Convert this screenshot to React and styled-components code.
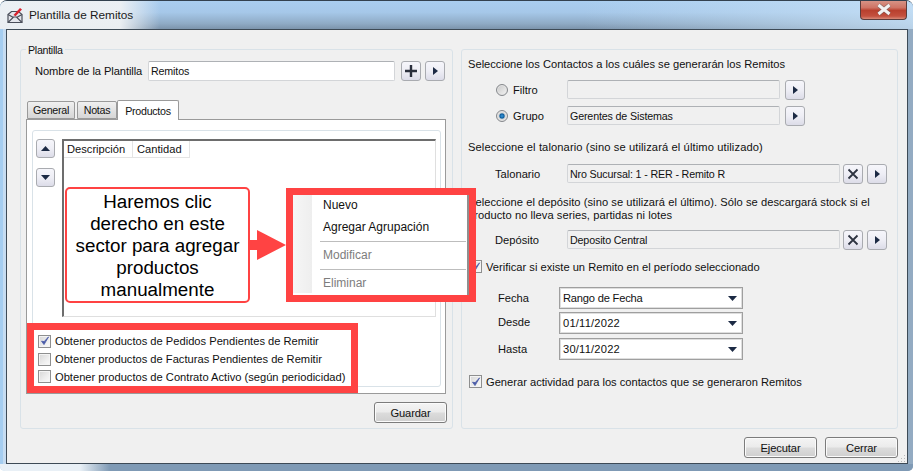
import React from 'react'
import styled, { createGlobalStyle } from 'styled-components'

const Global = createGlobalStyle`
  html, body { margin: 0; padding: 0; background: #fff; }
  body { width: 913px; height: 471px; overflow: hidden; font-family: "Liberation Sans", Arial, sans-serif; font-size: 11.15px; color: #111; }
`

const Win = styled.div`
  position: relative;
  width: 913px;
  height: 471px;
  box-sizing: border-box;
  display: flex;
  flex-direction: column;
  border-radius: 7px 7px 5px 5px;
  overflow: hidden;
  border-top: 1px solid #33414f;
  background:
    linear-gradient(90deg, #e9f0f6 0, #e9f0f6 80px, #7f9ab5 110px) bottom / 100% 7px no-repeat,
    linear-gradient(90deg, #a5cdf0 0, #a5cdf0 3px, #c6dcf1 3px, #c6dcf1 6px, #7f9ab5 6px, #7f9ab5 907px, #93abc2 907px, #93abc2 100%);
`

const TitleBar = styled.div`
  height: 28px;
  display: flex;
  align-items: center;
  flex-shrink: 0;
  padding-left: 7px;
  gap: 6px;
  background:
    linear-gradient(90deg, rgba(238,241,244,.96) 0, rgba(238,241,244,.96) 120px, rgba(238,241,244,0) 160px),
    linear-gradient(180deg, #a9cdf0 0, #a6c8e9 40%, #8fabc6 80%, #7c94ac 100%);
  position: relative;
  &::after {
    content: '';
    position: absolute;
    right: 0;
    top: 0;
    bottom: 0;
    width: 330px;
    background: linear-gradient(90deg, rgba(200,225,246,0), rgba(200,225,246,.8));
  }
`

const TitleText = styled.span`
  font-size: 11.8px;
  color: #1a1a1a;
`

const CloseBtn = styled.div`
  position: absolute;
  z-index: 2;
  top: -1px;
  right: 6px;
  width: 47px;
  height: 20px;
  box-sizing: border-box;
  border: 1px solid #5b3c3c;
  border-top: none;
  border-radius: 0 0 4px 4px;
  display: flex;
  align-items: center;
  justify-content: center;
  background: linear-gradient(180deg, #d8978a 0, #cf7465 40%, #b9402e 55%, #c4513f 85%, #d98a78 100%);
`

const Client = styled.div`
  flex: 1;
  margin: 0 5px 7px 6px;
  box-sizing: border-box;
  border: 1px solid #3d4a56;
  background: #f0f0f0;
  padding: 19px 9px 0 13px;
  display: flex;
  flex-direction: column;
`

const Panels = styled.div`
  display: flex;
  gap: 8px;
  height: 380px;
`

const Panel = styled.div`
  position: relative;
  box-sizing: border-box;
  width: ${p => p.$w}px;
  height: 100%;
  border: 1px solid #d9e2e8;
  border-radius: 3px;
`

const LeftBody = styled.div`
  padding: 11px 0 0 5px;
`

const Legend = styled.span`
  position: absolute;
  top: -7px;
  left: 5px;
  padding: 0 2px;
  font-size: 10.7px;
  letter-spacing: -0.3px;
  line-height: 14px;
  background: #f0f0f0;
`

const NameRow = styled.div`
  display: flex;
  align-items: center;
  height: 20px;
  padding-left: 9px;
`

const NameLabel = styled.span`
  width: 113px;
  flex-shrink: 0;
  letter-spacing: -0.08px;
`

const Field = styled.div`
  box-sizing: border-box;
  width: ${p => p.$w}px;
  height: ${p => p.$h || 19}px;
  flex-shrink: 0;
  display: flex;
  align-items: center;
  padding-left: 2px;
  font-size: 10.7px;
  letter-spacing: -0.15px;
  border: 1px solid #d3d5d8;
  border-top-color: #aeb1b5;
  border-radius: 2px;
  background: ${p => (p.$white ? '#fff' : '#f0f0f0')};
`

const IconBtn = styled.div`
  box-sizing: border-box;
  width: ${p => p.$w || 20}px;
  height: ${p => p.$h || 20}px;
  flex-shrink: 0;
  display: flex;
  align-items: center;
  justify-content: center;
  margin-left: ${p => p.$ml || 0}px;
  margin-top: ${p => p.$mt || 0}px;
  border: 1px solid #a9abb0;
  border-radius: 3px;
  background: linear-gradient(180deg, #f6f6fb 0, #eeeef5 50%, #dcdce8 100%);
`

const Tabs = styled.div`
  margin-top: 19px;
  display: flex;
  align-items: flex-end;
  height: 19px;
  padding-left: 1px;
  position: relative;
  z-index: 1;
`

const Tab = styled.div`
  box-sizing: border-box;
  width: ${p => p.$w}px;
  margin-right: ${p => p.$mr || 0}px;
  height: ${p => (p.$on ? 20 : 18)}px;
  margin-bottom: ${p => (p.$on ? -1 : 0)}px;
  display: flex;
  align-items: center;
  justify-content: center;
  font-size: 10.7px;
  letter-spacing: -0.3px;
  border: 1px solid #9a9a9a;
  border-bottom: ${p => (p.$on ? 'none' : '1px solid #9a9a9a')};
  border-radius: 2px 2px 0 0;
  background: ${p => (p.$on ? '#fff' : 'linear-gradient(180deg, #f0f0f0, #d6d6d6)')};
`

const TabPage = styled.div`
  box-sizing: border-box;
  width: 420px;
  height: 275px;
  border: 1px solid #9a9a9a;
  background: #fff;
  padding: 10px 0 0 5px;
`

const InnerFrame = styled.div`
  box-sizing: border-box;
  width: 409px;
  height: 257px;
  border: 1px solid #d9e2e8;
  border-radius: 3px;
  padding: 8px 0 0 3px;
`

const ListRow = styled.div`
  display: flex;
  gap: 7px;
  height: 178px;
`

const ArrowCol = styled.div`
  display: flex;
  flex-direction: column;
  width: 19px;
`

const List = styled.div`
  position: relative;
  box-sizing: border-box;
  width: 374px;
  height: 100%;
  background: #fff;
  border-top: 2px solid #6d6d6d;
  border-left: 2px solid #6d6d6d;
  border-right: 1px solid #dfdfdf;
  border-bottom: 1px solid #dfdfdf;
`

const ListHead = styled.div`
  display: flex;
  height: 17px;
`

const HeadCell = styled.div`
  box-sizing: border-box;
  width: ${p => p.$w}px;
  padding-left: ${p => p.$pl}px;
  line-height: 17px;
  border-right: 1px solid #e4e4e4;
  border-bottom: 1px solid #e4e4e4;
`

const Callout = styled.div`
  position: absolute;
  z-index: 5;
  left: 1px;
  top: 46px;
  box-sizing: border-box;
  width: 185px;
  height: 116px;
  padding-top: 2px;
  border: 2px solid #ff4343;
  border-radius: 5px;
  background: #fff;
  color: #000;
  font-size: 18.8px;
  line-height: 22px;
  text-align: center;
  white-space: nowrap;
  display: flex;
  align-items: center;
  justify-content: center;
`

const ArrowMark = styled.svg`
  position: absolute;
  z-index: 5;
  left: 186px;
  top: 89px;
`

const ContextMenu = styled.div`
  position: absolute;
  z-index: 5;
  left: 222px;
  top: 47px;
  box-sizing: border-box;
  width: 190px;
  height: 114px;
  border: 7px solid #ff4343;
  background: #fff;
  padding-left: 30px;
  font-size: 12px;
  box-shadow: inset -2px 0 0 #8f8f8f;
  &::before {
    content: '';
    position: absolute;
    left: 0;
    top: 0;
    bottom: 2px;
    width: 19px;
    background: linear-gradient(90deg, #f6f6f6, #eeeeee);
  }
`

const MenuItem = styled.div`
  height: ${p => p.$h}px;
  line-height: ${p => p.$h}px;
  color: ${p => (p.$off ? '#7d7d7d' : '#111')};
`

const MenuSep = styled.div`
  height: 1px;
  margin: ${p => p.$mt || 0}px 3px 0 -3px;
  background: #bdbdbd;
`

const CheckGroup = styled.div`
  box-sizing: border-box;
  margin: 13px 0 0 -2px;
  width: 317px;
  height: 56px;
  background: #fff;
  outline: 7px solid #ff4343;
  position: relative;
  z-index: 3;
  padding: 2px 0 0 4px;
`

const CheckRow = styled.div`
  display: flex;
  align-items: center;
  gap: 4px;
  height: ${p => p.$h || 18}px;
  margin-top: ${p => p.$mt || 0}px;
  margin-left: ${p => p.$ml || 0}px;
  white-space: nowrap;
`

const Box = styled.div`
  box-sizing: border-box;
  width: 13px;
  height: 13px;
  flex-shrink: 0;
  display: flex;
  align-items: center;
  justify-content: center;
  border: 1px solid #8e8f8f;
  background: linear-gradient(135deg, #d6d6d6 0, #eeeeee 60%, #fafafa 100%);
  box-shadow: inset 0 0 0 1px #f4f4f4;
`

const SaveRow = styled.div`
  display: flex;
  justify-content: flex-end;
  width: 421px;
  margin-top: 8px;
`

const PushBtn = styled.div`
  box-sizing: border-box;
  width: 73px;
  height: 21px;
  display: flex;
  align-items: center;
  justify-content: center;
  letter-spacing: -0.1px;
  border: 1px solid #7c7c7c;
  border-radius: 3px;
  background: linear-gradient(180deg, #f4f4f4 0, #ebebeb 48%, #dcdcdc 52%, #cfcfcf 100%);
  box-shadow: inset 0 0 0 1px #fbfbfb;
`

const RightBody = styled.div`
  padding: 7px 0 0 6px;
`

const Line = styled.div`
  line-height: ${p => p.$lh || 14}px;
  margin-top: ${p => p.$mt || 0}px;
  letter-spacing: ${p => p.$ls || 0}px;
  white-space: nowrap;
`

const OptRow = styled.div`
  display: flex;
  align-items: center;
  height: ${p => p.$h || 19}px;
  margin-top: ${p => p.$mt || 0}px;
  padding-left: ${p => p.$pl || 0}px;
`

const Radio = styled.div`
  box-sizing: border-box;
  width: 12px;
  height: 12px;
  border-radius: 50%;
  flex-shrink: 0;
  border: 1px solid #85888c;
  box-shadow: inset 0 0 0 1px #e4e4e4;
  background: ${p => (p.$on
    ? 'radial-gradient(circle at 50% 50%, #3a9ade 0, #0f5f9e 30%, #d8d8d8 46%, #ececec 100%)'
    : 'linear-gradient(135deg, #c8c8c8 0, #f4f4f4 100%)')};
`

const OptLabel = styled.span`
  width: ${p => p.$w}px;
  flex-shrink: 0;
  padding-left: ${p => p.$pl || 0}px;
  box-sizing: border-box;
`

const DateLabel = styled.span`
  width: 61px;
  flex-shrink: 0;
  margin-top: ${p => p.$mt || 0}px;
`

const Select = styled.div`
  box-sizing: border-box;
  width: 184px;
  height: 22px;
  flex-shrink: 0;
  display: flex;
  align-items: center;
  justify-content: space-between;
  padding: 0 5px 0 3px;
  letter-spacing: ${p => p.$ls || 0}px;
  border: 1px solid #9f9f9f;
  box-shadow: inset 0 0 0 1px #dedede;
  background: #fff;
`

const Footer = styled.div`
  display: flex;
  justify-content: flex-end;
  gap: 8px;
  margin-top: 8px;
`

const Grip = styled.svg`
  position: absolute;
  right: 7px;
  bottom: 8px;
`

const Tri = ({ dir = 'right' }) => {
  const pts = { right: '0,0 5,4 0,8', up: '0,5 4.5,0 9,5', down: '0,0 4.5,5 9,0' }
  const size = dir === 'right' ? [5, 8] : [9, 5]
  return (
    <svg width={size[0]} height={size[1]} viewBox={`0 0 ${size[0]} ${size[1]}`}>
      <polygon points={pts[dir]} fill="#1c2a44" />
    </svg>
  )
}

const Plus = () => (
  <svg width="14" height="14" viewBox="0 0 14 14">
    <path d="M7 1v12M1 7h12" stroke="#2a2f3c" strokeWidth="2.4" />
  </svg>
)

const Cross = () => (
  <svg width="12" height="12" viewBox="0 0 12 12">
    <path d="M1.5 1.5l9 9M10.5 1.5l-9 9" stroke="#2d3340" strokeWidth="1.8" />
  </svg>
)

const Check = () => (
  <svg width="10" height="10" viewBox="0 0 10 10">
    <path d="M1.5 5.2L4 8.6 8.6 0.8 4.2 5.6z" fill="#4a5ca8" stroke="#4a5ca8" strokeWidth="0.8" />
  </svg>
)

const MailIcon = () => (
  <svg width="16" height="16" viewBox="0 0 16 16">
    <path d="M1 7.5L4.5 4.5h7l3.5 3v8H1z" fill="#e4e6ec" stroke="#4a4e5a" strokeWidth="1.2" />
    <path d="M1 15.5L6.5 10h3l5.5 5.5M1 7.5l5.5 3M15 7.5l-5.5 3" fill="none" stroke="#4a4e5a" strokeWidth="1.2" />
    <path d="M6.5 8L13 1l2 1.5-6.5 6.8z" fill="#d8232f" />
  </svg>
)

const CloseX = () => (
  <svg width="18" height="13" viewBox="0 0 18 13">
    <path d="M3.5 2l11 9M14.5 2l-11 9" stroke="#5c5c5c" strokeWidth="4.4" opacity="0.55" />
    <path d="M3.5 2l11 9M14.5 2l-11 9" stroke="#f2f2f2" strokeWidth="3" />
  </svg>
)

const CheckItem = ({ on, children, ...rest }) => (
  <CheckRow {...rest}>
    <Box>{on && <Check />}</Box>
    {children}
  </CheckRow>
)

const App = () => {
  return (
    <>
      <Global />
      <Win>
        <TitleBar>
          <MailIcon />
          <TitleText>Plantilla de Remitos</TitleText>
        </TitleBar>
        <CloseBtn><CloseX /></CloseBtn>
        <Client>
          <Panels>
            <Panel $w={433}>
              <Legend>Plantilla</Legend>
              <LeftBody>
                <NameRow>
                  <NameLabel>Nombre de la Plantilla</NameLabel>
                  <Field $w={247} $h={20} $white>Remitos</Field>
                  <IconBtn $ml={6}><Plus /></IconBtn>
                  <IconBtn $ml={4}><Tri /></IconBtn>
                </NameRow>
                <Tabs>
                  <Tab $w={48} $mr={2}>General</Tab>
                  <Tab $w={40}>Notas</Tab>
                  <Tab $w={62} $on>Productos</Tab>
                </Tabs>
                <TabPage>
                  <InnerFrame>
                    <ListRow>
                      <ArrowCol>
                        <IconBtn $w={19} $h={19}><Tri dir="up" /></IconBtn>
                        <IconBtn $w={19} $h={19} $mt={10}><Tri dir="down" /></IconBtn>
                      </ArrowCol>
                      <List>
                        <ListHead>
                          <HeadCell $w={69} $pl={3}>Descripción</HeadCell>
                          <HeadCell $w={57} $pl={4}>Cantidad</HeadCell>
                        </ListHead>
                        <Callout>
                          <div>Haremos clic<br />derecho en este<br />sector para agregar<br />productos<br />manualmente</div>
                        </Callout>
                        <ArrowMark width="36" height="30" viewBox="0 0 36 30">
                          <polygon points="0,10 7,10 7,0 36,15 7,30 7,20 0,20" fill="#ff4343" />
                        </ArrowMark>
                        <ContextMenu>
                          <MenuItem $h={20}>Nuevo</MenuItem>
                          <MenuItem $h={24}>Agregar Agrupación</MenuItem>
                          <MenuSep $mt={2} />
                          <MenuItem $h={27} $off>Modificar</MenuItem>
                          <MenuSep />
                          <MenuItem $h={27} $off>Eliminar</MenuItem>
                        </ContextMenu>
                      </List>
                    </ListRow>
                    <CheckGroup>
                      <CheckItem on>Obtener productos de Pedidos Pendientes de Remitir</CheckItem>
                      <CheckItem>Obtener productos de Facturas Pendientes de Remitir</CheckItem>
                      <CheckItem $h={17}>Obtener productos de Contrato Activo (según periodicidad)</CheckItem>
                    </CheckGroup>
                  </InnerFrame>
                </TabPage>
                <SaveRow>
                  <PushBtn>Guardar</PushBtn>
                </SaveRow>
              </LeftBody>
            </Panel>
            <Panel $w={437}>
              <RightBody>
                <Line>Seleccione los Contactos a los cuáles se generarán los Remitos</Line>
                <OptRow $mt={9} $pl={28}>
                  <Radio />
                  <OptLabel $w={59} $pl={5}>Filtro</OptLabel>
                  <Field $w={213} />
                  <IconBtn $ml={5}><Tri /></IconBtn>
                </OptRow>
                <OptRow $mt={7} $pl={28}>
                  <Radio $on />
                  <OptLabel $w={59} $pl={5}>Grupo</OptLabel>
                  <Field $w={213}>Gerentes de Sistemas</Field>
                  <IconBtn $ml={5}><Tri /></IconBtn>
                </OptRow>
                <Line $mt={15} $ls={0.11}>Seleccione el talonario (sino se utilizará el último utilizado)</Line>
                <OptRow $mt={10} $pl={27}>
                  <OptLabel $w={72}>Talonario</OptLabel>
                  <Field $w={273}>Nro Sucursal: 1 - RER - Remito R</Field>
                  <IconBtn $ml={3}><Cross /></IconBtn>
                  <IconBtn $ml={4}><Tri /></IconBtn>
                </OptRow>
                <Line $mt={13} $lh={13} $ls={0.05}>
                  Seleccione el depósito (sino se utilizará el último). Sólo se descargará stock si el<br />
                  producto no lleva series, partidas ni lotes
                </Line>
                <OptRow $mt={8} $pl={27}>
                  <OptLabel $w={72}>Depósito</OptLabel>
                  <Field $w={273}>Deposito Central</Field>
                  <IconBtn $ml={3}><Cross /></IconBtn>
                  <IconBtn $ml={4}><Tri /></IconBtn>
                </OptRow>
                <CheckItem on $mt={10} $h={15} $ml={1}>Verificar si existe un Remito en el período seleccionado</CheckItem>
                <OptRow $mt={13} $h={22} $pl={30}>
                  <DateLabel>Fecha</DateLabel>
                  <Select $ls={-0.2}>Rango de Fecha<Tri dir="down" /></Select>
                </OptRow>
                <OptRow $mt={3} $h={22} $pl={30}>
                  <DateLabel $mt={-2}>Desde</DateLabel>
                  <Select $ls={0.2}>01/11/2022<Tri dir="down" /></Select>
                </OptRow>
                <OptRow $mt={4} $h={22} $pl={30}>
                  <DateLabel>Hasta</DateLabel>
                  <Select $ls={0.2}>30/11/2022<Tri dir="down" /></Select>
                </OptRow>
                <CheckItem on $mt={14} $h={15} $ml={1}>Generar actividad para los contactos que se generaron Remitos</CheckItem>
              </RightBody>
            </Panel>
          </Panels>
          <Footer>
            <PushBtn>Ejecutar</PushBtn>
            <PushBtn>Cerrar</PushBtn>
          </Footer>
        </Client>
        <Grip width="9" height="9" viewBox="0 0 9 9">
          <path d="M7 1h1v1H7zM4 4h1v1H4zM7 4h1v1H7zM1 7h1v1H1zM4 7h1v1H4zM7 7h1v1H7z" fill="#b9b9b9" />
        </Grip>
      </Win>
    </>
  )
}

export default App
